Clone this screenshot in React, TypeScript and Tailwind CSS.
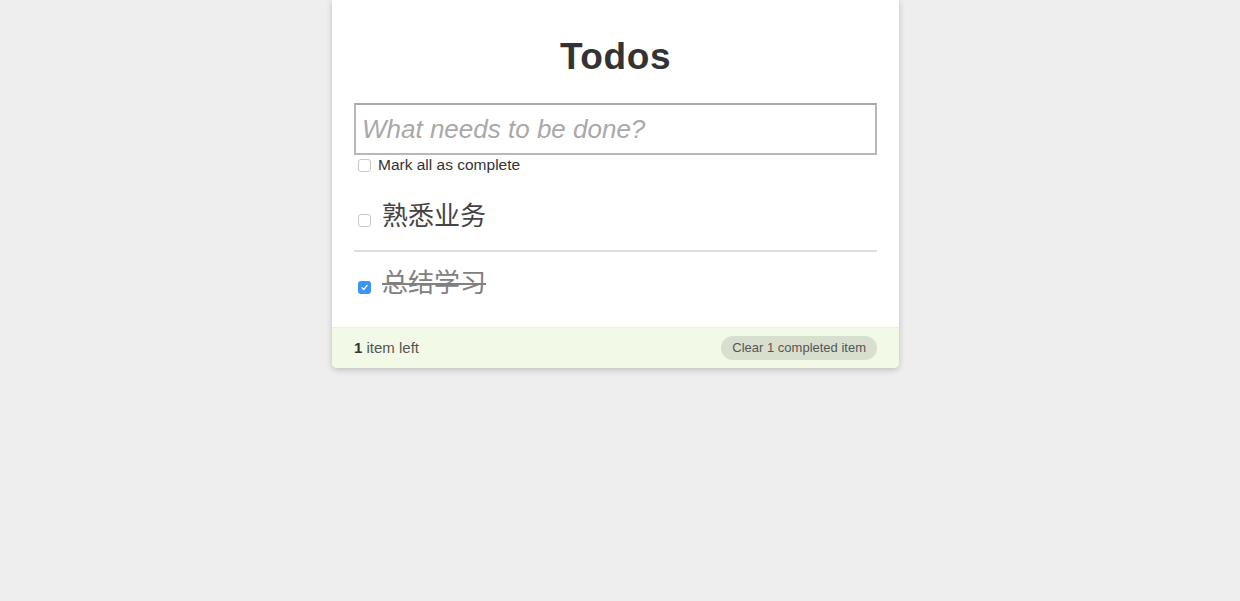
import React from 'react'

interface Todo {
	title: string,
	done: boolean
}

const todos: Todo[] = [
	{ title: '熟悉业务', done: false },
	{ title: '总结学习', done: true },
]

function Check({ checked, className = '' }: { checked: boolean, className?: string }) {
	if (checked) {
		return (
			<span className={`flex items-center justify-center w-[13px] h-[13px] shrink-0 rounded-[3px] bg-[#3b94f7] ${className}`}>
				<svg width="9" height="9" viewBox="0 0 10 10" fill="none">
					<path d="M2.2 5.3 L4.2 7.3 L7.9 2.7" stroke="#fff" strokeWidth="1.5" strokeLinecap="round" strokeLinejoin="round" />
				</svg>
			</span>
		)
	}
	return <span className={`block w-[13px] h-[13px] shrink-0 rounded-[3px] border border-[#c9c9c9] bg-white ${className}`} />
}

export default function App() {
	const left = todos.filter(t => !t.done).length
	const completed = todos.length - left

	return (
		<div className="min-h-screen bg-[#eeeeee] pr-[9px] font-['Liberation_Sans','Noto_Sans_CJK_SC',sans-serif] text-[#333333]">
			<div className="w-[567px] mx-auto bg-white rounded-b-[5px] shadow-[0_2px_6px_0_rgba(0,0,0,0.2)]">
				<div className="px-[22px] pt-[32px] pb-[10px]">
					<h1 className="text-[37px] leading-[50px] font-bold text-center tracking-[0.6px]">Todos</h1>
					<input
						type="text"
						placeholder="What needs to be done?"
						className="mt-[21px] block w-full h-[52px] px-[6px] text-[26px] border-2 border-[#b8b8b8] border-t-[#a9a9a9] outline-none placeholder:italic placeholder:text-[#a9a9a9]"
					/>
					<div className="flex items-center h-[20px] text-[15.5px] gap-[7px] pl-[4px]">
						<Check checked={false} />
						<span>Mark all as complete</span>
					</div>
					<ul className="mt-[10px]">
						{todos.map((t, i) => (
							<li key={i} className={`flex items-center pt-[13px] pb-[16px] pl-[4px] text-[26px] leading-[36px] ${i < todos.length - 1 ? 'border-b-2 border-[#dedede]' : ''}`}>
								<Check checked={t.done} className="mt-[9px]" />
								<label className={`ml-[11px] ${t.done ? 'line-through text-[#808080]' : 'text-[#444444]'}`}>{t.title}</label>
							</li>
						))}
					</ul>
				</div>
				<div className="flex items-center justify-between h-[41px] px-[22px] bg-[#f2f9e7] border-t border-[#eaeee4] rounded-b-[5px] text-[#555555]">
					<span className="text-[15px]"><b className="text-[#333333]">{left}</b> item left</span>
					<button className="h-[24px] px-[11px] rounded-full bg-black/10 text-[13px] text-[#555555]">
						Clear {completed} completed item
					</button>
				</div>
			</div>
		</div>
	)
}
